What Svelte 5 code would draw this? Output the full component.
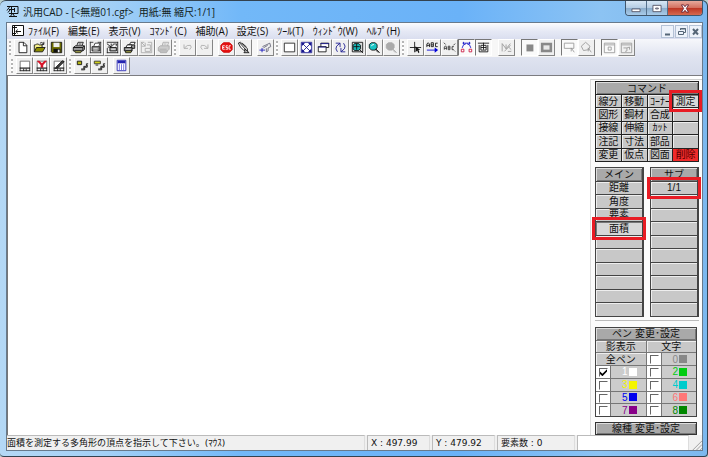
<script>
  const menus = ['ﾌｧｲﾙ(F)', '編集(E)', '表示(V)', 'ｺﾏﾝﾄﾞ(C)', '補助(A)', '設定(S)', 'ﾂｰﾙ(T)', 'ｳｨﾝﾄﾞｳ(W)', 'ﾍﾙﾌﾟ(H)'];

  // each icon is a list of [path, fill, stroke] on a 15x15 grid
  const icons = {
    new: [['M3.5 1.5H9L12.5 5V13.5H3.5Z', '#fff', '#111'], ['M8.5 1.5V5.5H12.5', 'none', '#111']],
    open: [
      ['M1.5 12.5V4.5H3L4 3.5H6L7 4.5H10.5V7.5', '#f4ee8a', '#111'],
      ['M1.5 12.5L4 7.5H14L11 12.5Z', '#8c8c00', '#111'],
      ['M8 2.5Q10 0.5 12.5 3.5M12.5 1V4H10', 'none', '#111']
    ],
    save: [
      ['M1.5 1.5H13.5V13.5H2.5L1.5 12.5Z', '#6d6d00', '#111'],
      ['M4 2H11V7H4Z', '#eee', 'none'],
      ['M4 9H12V13H4Z', '#111', 'none'],
      ['M9 10H11V13H9Z', '#eee', 'none']
    ],
    print: [
      ['M5.5 5.5L7 1.5H13L11.5 5.5', '#fff', '#111'],
      ['M1.5 7.5L4 5.5H14L12.5 7.5Z', '#bbb', '#111'],
      ['M1.5 7.5H12.5V11.5H1.5ZM12.5 7.5L14.5 5.5V9.5L12.5 11.5', '#999', '#111'],
      ['M3 11.5H11L10 13.5H4Z', '#e6e66a', '#111'],
      ['M7.5 3.5H11', 'none', '#111']
    ],
    printView: [
      ['M1 1.5H5M1.5 1V14M1 13.5H14M13.5 1V14M10 1.5H14', 'none', '#333'],
      ['M5.5 6L7 2.5H12.5L11.5 6', '#fff', '#333'],
      ['M3.5 6.5H12.5V11.5H3.5Z', '#888', '#222'],
      ['M5 8.5H10M5 10.5H10', 'none', '#ddd']
    ],
    printArea: [
      ['M1 1.5H14M13.5 1V14M1 13.5H14M1.5 8V14', 'none', '#222'],
      ['M1 3L6 7M6 3V7H2', 'none', '#111'],
      ['M7.5 6L8.5 3.5H12.5L11.5 6', '#fff', '#222'],
      ['M4.5 7.5H12V11.5H4.5Z', '#999', '#111'],
      ['M6 9.5H11', 'none', '#eee']
    ],
    printAll: [
      ['M7.5 4L9 1.5H14L13 4', '#fff', '#111'],
      ['M5.5 4.5H13.5V8.5H5.5Z', '#999', '#111'],
      ['M3.5 7L5 4.5H10.5L9.5 7', '#fff', '#111'],
      ['M1.5 7.5H10.5V11.5H1.5Z', '#777', '#111'],
      ['M3 11.5H10L9 13.5H3Z', '#d8d85a', '#111'],
      ['M3 9.5H9', 'none', '#ddd']
    ],
    plotOff: [
      ['M1.5 1.5H5M1.5 1.5V13.5H13.5V1.5H9', 'none', '#aaa'],
      ['M1 1L6 6M6 2V6H2M6 8.5H12V12H6ZM8 4.5H12V8', 'none', '#aaa']
    ],
    plotAllOff: [
      ['M6 5.5L7 1.5H13.5L12 5.5', 'none', '#aaa'],
      ['M1.5 7.5L4 5.5H14V9.5L12 11.5H1.5ZM3 11.5L4 13.5H11L12 11.5M3 9.5H11M7.5 3.5H11', '#ccc', '#aaa']
    ],
    undo: [['M3.5 4V8.5H8M4 8Q7 4 11 5Q13 7 10 10', 'none', '#aaa']],
    redo: [['M11.5 4V8.5H7M11 8Q8 4 4 5Q2 7 5 10', 'none', '#aaa']],
    esc: [
      ['M4 2H11L14 5V10L11 13H4L1 10V5Z', '#e51212', '#c00'],
      ['M5.5 5.5H3V9.5H5.5M3 7.5H5M9 5.5H7V7.5H9V9.5H6.5M12.5 5.5H10.5V9.5H12.5', 'none', '#fff']
    ],
    hand: [
      ['M1.5 2.5L4 1.5L9 6L12 9V12L8 11L4 7Z', '#fff', '#111'],
      ['M3 2L10 10M6 2.5L11 7M9 12V9L14 13.5H8Z', '#bbb', '#111']
    ],
    locate: [
      ['M0.5 10.5H7M3.5 8V13', 'none', '#1414b8'],
      ['M4 6.5L12.5 2.5L13.5 6.5L10.5 8V11.5L8.5 12.5V8.5M5 8L10 5', 'none', '#667']
    ],
    frame: [['M1.5 2.5H13.5V12.5H1.5Z', '#fff', '#222']],
    fit: [
      ['M1.5 1.5H13.5V13.5H1.5Z', '#fff', '#17178e'],
      ['M2 2H6L2 6ZM13 2H9L13 6ZM2 13V9L6 13ZM13 13H9L13 9Z', '#17178e', 'none'],
      ['M3 3L12 12M12 3L3 12', 'none', '#17178e']
    ],
    previous: [
      ['M4.5 2.5H13.5V7.5H4.5Z', '#fff', '#111'],
      ['M4 3H14', 'none', '#17178e'],
      ['M1.5 6.5H10.5V12.5H1.5Z', '#fff', '#111'],
      ['M1 7H11', 'none', '#17178e']
    ],
    refresh: [['M2 2.5H7V7M7 2.5L3 6Q1 9 4 12.5M13 12.5H8V8M8 12.5L12 9Q14 6 11 2.5', 'none', '#17178e']],
    zoomArea: [
      ['M1.5 1.5H13.5V12.5H1.5Z', '#ddd', '#111'],
      ['M4 3H9L11 5V9L9 11H4L2.5 9V5Z', '#16b4b4', '#111'],
      ['M9.5 9.5L14 14M3 6.5H10M6.5 3V10', 'none', '#111']
    ],
    zoom: [
      ['M4 2H8L10.5 4V8L8 10.5H4L1.5 8V4Z', '#18c4c4', '#111'],
      ['M4 6Q4 4 7 4', 'none', '#fff'],
      ['M9 9L13.5 13.5M8.5 10L12 13.5', 'none', '#111']
    ],
    zoomOff: [['M4 2H8L10.5 4V8L8 10.5H4L1.5 8V4Z', '#aaa', '#aaa'], ['M9 9L13.5 13.5M8.5 10L12 13.5', 'none', '#aaa']],
    cross: [['M1 7.5H14M6.5 1V13', 'none', '#111'], ['M7.5 6V13L9.5 11L11 14L12 13L11 10.5H13Z', '#111', 'none']],
    textRight: [
      ['M1 7V3.5L2.5 2L4 3.5V7M1 5H4M6 6.5V2H8.5V6.5ZM6 4.5H8.5M13.5 2.5H11V6.5H13.5', 'none', '#111'],
      ['M1 10.5H11', 'none', '#0000d8'],
      ['M10 7.5L14 10.5L10 13.5Z', '#0000d8', 'none']
    ],
    text: [['M1.5 10V7L3 5.5L4 7V10M1.5 8.5H4M6 10V6H8V10ZM6 8H8M12.5 6.5H10.5V10H12.5M1 2L3 4M14 3L12 5M13 11L14 12', 'none', '#333']],
    arc: [
      ['M2.5 8Q3 4 7 3M12.5 8Q12 4 8 3M3 2.5H12M4 1V4M11 1V4', 'none', '#1414c8'],
      ['M1.5 9.5H4.5V12.5H1.5ZM10.5 9.5H13.5V12.5H10.5Z', '#fff', '#c8143c']
    ],
    picture: [['M1 2.5H14M4.5 5H10.5V10.5H4.5ZM7.5 2V10M4.5 7.5H10.5M2.5 4.5V12.5H12.5V4.5', 'none', '#111']],
    penOff: [['M2.5 3V12M2.5 3L7 9M7 4V9M7 9L12 3M5 12L12 5M9 12H13M10 7L13 10', 'none', '#999']],
    solid: [['M4 4H12V12H4Z', '#888', 'none']],
    hollow: [['M1 2H14V13H1Z', '#888', 'none'], ['M4 5H11V10H4Z', '#e8e8e8', 'none']],
    pickBox: [['M1.5 2.5H12.5V8.5H1.5ZM9.5 8L13 13M9.5 8V12', 'none', '#999']],
    pickPoly: [['M6.5 1.5L11.5 6L10 10L4 11L1.5 6ZM9.5 8L13 13M9.5 8V12', 'none', '#999']],
    viewBox: [['M1.5 2.5H13.5V13.5H1.5ZM2 4.5H13M6 7H9.5V10.5H6Z', 'none', '#999']],
    viewPoly: [['M1.5 2.5H13.5V13.5H1.5ZM2 4.5H13M4 8H8V11.5L6 12M8 8L11 7V10', 'none', '#999']],
    snap: [
      ['M2.5 2.5H13.5V10.5H2.5Z', '#fff', '#666'],
      ['M2 10.5H14M2.5 10V14M13.5 10V14M2 13.5H14M6.5 11V14M9.5 11V14', 'none', '#222']
    ],
    snapOff: [
      ['M2.5 2.5H13.5V10.5H2.5Z', '#fff', '#666'],
      ['M2 2H5L8 5L11 2H14L9.5 7V10H6.5V7Z', '#d81428', 'none'],
      ['M2 10.5H14M2.5 10V14M13.5 10V14M2 13.5H14M6.5 11V14M9.5 11V14', 'none', '#222']
    ],
    snapEdit: [
      ['M2.5 2.5H13.5V10.5H2.5Z', '#fff', '#666'],
      ['M5 9L12 2L14 3L7 10L4 11Z', '#444', '#111'],
      ['M2 10.5H14M2.5 10V14M13.5 10V14M2 13.5H14M6.5 11V14M9.5 11V14', 'none', '#222']
    ],
    layer: [['M1.5 2.5H6.5V6.5H1.5Z', '#b4b414', '#111'], ['M6 11.5H9V8.5H12V5.5H14M6 12.5H10V9.5H13V6.5', 'none', '#111']],
    layerSet: [
      ['M1.5 2.5H8.5V5.5H1.5Z', '#d0d018', '#333'],
      ['M3 7H6M6 11.5H9V8.5H12V5.5H14M6 12.5H10V9.5H13V6.5', 'none', '#111']
    ],
    calc: [
      ['M2.5 1.5H12.5V13.5H2.5Z', '#fff', '#2222b0'],
      ['M3 2H12V5H3Z', '#2222b0', 'none'],
      ['M5 6V13M7.5 6V13M10 6V13', 'none', '#6a6ae0']
    ]
  };

  const toolbar = [
    { items: [['new', '新規'], ['open', '開く'], ['save', '保存']] },
    { sep: 'gap', items: [['print', '印刷'], ['printView', '印刷プレビュー'], ['printArea', '範囲印刷'], ['printAll', '連続印刷'], ['plotOff', 'プロット', 'off'], ['plotAllOff', '連続プロット', 'off']] },
    { sep: 'grip', items: [['undo', '元に戻す', 'off'], ['redo', 'やり直し', 'off']] },
    { sep: 'gap', items: [['esc', '中断'], ['hand', '手動']] },
    { sep: 'gap', items: [['locate', '位置']] },
    { sep: 'grip', items: [['frame', '枠'], ['fit', '全体'], ['previous', '前画面'], ['refresh', '再表示'], ['zoomArea', '範囲拡大'], ['zoom', '拡大'], ['zoomOff', '縮小', 'off']] },
    { sep: 'grip', items: [['cross', 'カーソル'], ['textRight', '文字方向'], ['text', '文字'], ['arc', '円弧', 'down'], ['picture', '画像', 'down']] },
    { sep: 'wide', items: [['penOff', 'ペン', 'off']] },
    { sep: 'wide', items: [['solid', '塗り', 'down'], ['hollow', '中抜き']] },
    { sep: 'wide', items: [['pickBox', '矩形選択', 'down'], ['pickPoly', '多角形選択']] },
    { sep: 'wide', items: [['viewBox', '矩形表示', 'down'], ['viewPoly', '多角形表示']] }
  ];

  const subbar = [
    { items: [['snap', 'スナップ'], ['snapOff', 'スナップ解除'], ['snapEdit', 'スナップ編集']] },
    { sep: 'grip', items: [['layer', 'レイヤ'], ['layerSet', 'レイヤ設定']] },
    { sep: 'gap', items: [['calc', '電卓']] }
  ];

  const commands = [
    '線分', '移動', 'ｺｰﾅｰ', '測定',
    '図形', '鋼材', '合成', '',
    '接線', '伸縮', 'ｶｯﾄ', '',
    '注記', '寸法', '部品', '',
    '変更', '仮点', '図面', '削除'
  ];
  const mainItems = ['距離', '角度', '要素', '面積', '', '', '', '', '', ''];
  const subItems = ['1/1', '', '', '', '', '', '', '', '', ''];

  const penColors = ['gray', 'white', 'lime', 'yellow', 'cyan', 'blue', 'pink', 'purple', 'green'];
  let shown = $state([false, true, false, false, false, false, false, false, false]);
  let command = $state('測定');
  let mainItem = $state('面積');
</script>

{#snippet icon(name)}
  <svg viewBox="0 0 15 15" aria-hidden="true">
    {#each icons[name] as [d, fill, stroke]}
      <path {d} {fill} {stroke} />
    {/each}
  </svg>
{/snippet}

{#snippet tools(groups)}
  {#each groups as group}
    {#if group.sep}<span class={group.sep}></span>{/if}
    {#each group.items as [name, label, mode]}
      <button class="tool {mode}" aria-label={label} disabled={mode === 'off'}>{@render icon(name)}</button>
    {/each}
  {/each}
{/snippet}

{#snippet pen(n)}
  <span class="check"><input type="checkbox" id="pen{n}" bind:checked={shown[n]} /></span>
  <label class="pen {penColors[n]}" for="pen{n}">{n}<i></i></label>
{/snippet}

<div class="window">
  <header class="title">
    <svg class="app-icon" viewBox="0 0 13 13" aria-hidden="true">
      <path d="M1 1.5H12V8.5H3M5.5 2V8M3 4.5H8M8.5 3V7M1 5.5L3.5 2M2 7.5L4 5M4 12L6 9M9 12L7 9M3 11.5H11" fill="none" stroke="#111" />
    </svg>
    <h1>汎用CAD - [&lt;無題01.cgf&gt;&nbsp; 用紙:無 縮尺:1/1]</h1>
    <div class="caption">
      <button aria-label="最小化"><svg viewBox="0 0 12 10"><path d="M1.5 5.5H10.5V8.5H1.5Z" fill="#fff" stroke="#556" /></svg></button>
      <button aria-label="元に戻す"><svg viewBox="0 0 12 10"><path d="M1.5 1.5H10.5V8.5H1.5ZM4.5 4.5H7.5V5.5H4.5Z" fill="#fff" stroke="#556" /></svg></button>
      <button class="close" aria-label="閉じる"><svg viewBox="0 0 12 10"><path d="M2 1H4.5L6 3L7.5 1H10L7.5 5L10 9H7.5L6 7L4.5 9H2L4.5 5Z" fill="#fff" stroke="#623" /></svg></button>
    </div>
  </header>

  <div class="client">
    <nav class="menubar">
      <svg class="doc-icon" viewBox="0 0 12 12" aria-hidden="true">
        <path d="M0.5 0.5H11.5V10.5H0.5Z" fill="#fff" stroke="#111" />
        <path d="M2.5 1V11M1 2.5H5M4 6.5H9M5.5 4.5L4 6.5L5.5 8.5M1 8.5H4" fill="none" stroke="#111" />
      </svg>
      {#each menus as menu}
        <button>{menu}</button>
      {/each}
      <div class="mdi">
        <button aria-label="文書を最小化"><svg viewBox="0 0 11 11"><path d="M3 8.5H8" fill="none" stroke="#567" stroke-width="2" /></svg></button>
        <button aria-label="文書を元に戻す"><svg viewBox="0 0 11 11"><path d="M4.5 4V2.5H9.5V6.5H8M2.5 5.5H7.5V8.5H2.5ZM4 3H10" fill="none" stroke="#567" /></svg></button>
        <button aria-label="文書を閉じる"><svg viewBox="0 0 11 11"><path d="M3 3L8 8.5M8 3L3 8.5" fill="none" stroke="#567" stroke-width="2" /></svg></button>
      </div>
    </nav>

    <div class="bars">
      <div class="toolbar"><span class="grip"></span>{@render tools(toolbar)}</div>
      <div class="toolbar second"><span class="grip"></span>{@render tools(subbar)}</div>
    </div>

    <main>
      <section class="canvas" aria-label="図面"></section>

      <aside>
        <section class="commands">
          <h2>コマンド</h2>
          {#each commands as name}
            <button class:on={name === command && name} class:marked={name === '測定'} class:delete={name === '削除'} onclick={() => (command = name)}>{name}</button>
          {/each}
        </section>

        <div class="lists">
          <section class="list">
            <h2>メイン</h2>
            {#each mainItems as name}
              <button class:on={name === mainItem && name} class:marked={name === '面積'} onclick={() => (mainItem = name)}>{name}</button>
            {/each}
          </section>
          <section class="list">
            <h2>サブ</h2>
            {#each subItems as name}
              <button class:marked={name === '1/1'}>{name}</button>
            {/each}
          </section>
        </div>

        <section class="lower">
          <div class="pens">
            <button class="heading">ペン 変更･設定</button>
            <button class="half">影表示</button>
            <button class="half">文字</button>
            <button class="half">全ペン</button>
            {#each penColors as _, n}
              {@render pen(n)}
            {/each}
          </div>
          <button class="heading line">線種 変更･設定</button>
        </section>
      </aside>
    </main>

    <footer>
      <span class="message">面積を測定する多角形の頂点を指示して下さい。(ﾏｳｽ)</span>
      <span class="cell">X : 497.99</span>
      <span class="cell">Y : 479.92</span>
      <span class="cell count">要素数 : 0</span>
      <span class="progress"></span>
      <svg class="resize" viewBox="0 0 12 12" aria-hidden="true"><path d="M2 12L12 2M6 12L12 6M10 12L12 10" fill="none" stroke="#999" /></svg>
    </footer>
  </div>
</div>

<style>
  :global(body) {
    background: #b9cfcf;
  }

  .window {
    box-sizing: border-box;
    min-height: 100vh;
    display: flex;
    flex-direction: column;
    padding: 0 4px 5px 6px;
    border: 1px solid #33424f;
    border-width: 1px 1px 1px 0;
    border-radius: 6px 6px 4px 4px;
    background: linear-gradient(90deg, #b4d8f5 0, #a3d0f6 15%, #72b8f8 34%, #6ab2f8 65%, #8cc3f3 85%, #7cb8ee 100%);
    font-family: "Open Sans", "Noto Sans CJK JP", sans-serif;
    font-size: 10px;
    color: #111;
  }

  button {
    margin: 0;
    padding: 0;
    border: 0;
    background: none;
    font: inherit;
    color: inherit;
    white-space: nowrap;
  }

  h1, h2 {
    margin: 0;
    font-weight: 400;
  }

  .title {
    display: flex;
    align-items: center;
    height: 21px;
    gap: 4px;
  }

  .app-icon {
    width: 13px;
    height: 13px;
  }

  h1 {
    flex: 1;
    font-size: 10px;
    line-height: 20px;
    color: #122;
    white-space: nowrap;
  }

  .caption {
    display: flex;
    align-self: flex-start;
    border: 1px solid #40566c;
    border-top: 0;
    border-radius: 0 0 4px 4px;
    overflow: hidden;
  }

  .caption button {
    display: grid;
    place-items: center;
    width: 21px;
    height: 14px;
    border-right: 1px solid #54708c;
    background: linear-gradient(#d7e7f5, #b5cde3 48%, #8aaccb 50%, #a8cbe9);
  }

  .caption .close {
    width: 34px;
    border: 0;
    background: linear-gradient(#e7a99c, #d4705f 48%, #bd3422 50%, #d56a50);
  }

  .caption svg {
    width: 12px;
    height: 9px;
  }

  .client {
    flex: 1;
    display: flex;
    flex-direction: column;
    border: 1px solid #687a8c;
    background: #f0f0f0;
  }

  .menubar {
    display: flex;
    align-items: center;
    gap: 9px;
    height: 16px;
    padding-left: 5px;
    background: linear-gradient(#fbfcfe, #e6e9f5 50%, #dadeef);
    line-height: 16px;
  }

  .doc-icon {
    width: 12px;
    height: 12px;
    margin-right: -5px;
  }

  .mdi {
    display: flex;
    gap: 1px;
    margin-left: auto;
  }

  .mdi button {
    display: grid;
    place-items: center;
    box-sizing: border-box;
    width: 13px;
    height: 13px;
    border: 1px solid #b4c2d6;
    background: #edf2fa;
  }

  .mdi svg {
    width: 11px;
    height: 11px;
  }

  .bars {
    background: linear-gradient(#f6f7fb, #dfe3f0 50%, #d5daea);
    border-bottom: 1px solid #7c7c80;
  }

  .toolbar {
    display: flex;
    box-sizing: border-box;
    width: max-content;
    height: 18px;
    background: #f7f7f7;
  }

  .second {
    padding-left: 2px;
  }

  .tool {
    box-sizing: border-box;
    width: 17px;
    height: 17px;
    border: 1px solid;
    border-color: #fff #858585 #858585 #fff;
    background: #f0f0f0;
  }

  .tool.down {
    border-color: #777 #fff #fff #777;
    background: #fafafa;
  }

  .tool svg {
    display: block;
    width: 15px;
    height: 15px;
    padding: 1px;
    box-sizing: border-box;
  }

  .gap {
    width: 5px;
  }

  .wide {
    width: 6px;
  }

  .grip {
    box-sizing: border-box;
    width: 7px;
    margin: 2px 0;
    border: solid transparent;
    border-width: 0 3px 0 2px;
    background: repeating-linear-gradient(#b5b5b5 0 2px, #fff 2px 4px) padding-box;
  }

  main {
    flex: 1;
    display: flex;
  }

  .canvas {
    flex: 1;
    border-left: 1px solid #777;
    background: #fff;
  }

  aside {
    width: 104px;
    margin-top: 3px;
    padding: 1px 3px 0 4px;
    border-top: 1px solid #d0d0d0;
    border-left: 1px solid #ddd;
    background: #fbfbfb;
    box-shadow: 0 -3px #fff;
    font-family: "Liberation Sans", "Noto Sans CJK JP", sans-serif;
  }

  aside button, h2 {
    position: relative;
    display: flex;
    align-items: center;
    justify-content: center;
    min-width: 0;
    background: #c8c8c8;
    font-size: 10px;
    line-height: 11px;
  }

  aside button {
    box-shadow: inset 1px 1px #eee;
  }

  h2, aside .heading {
    background: #a9a9a9;
    box-shadow: inset 1px 1px #ddd, inset -1px -1px #777;
  }

  .commands {
    display: grid;
    grid-template-columns: repeat(4, 1fr);
    grid-template-rows: 12px repeat(5, 1fr);
    gap: 1px;
    box-sizing: border-box;
    height: 81px;
    border: 1px solid #222;
    background: #222;
  }

  .commands h2 {
    grid-column: 1 / -1;
  }

  aside .on {
    background: #d8d8d8;
    box-shadow: inset 1px 1px #777;
  }

  aside .delete {
    background: #f02a2a;
    color: #500;
    box-shadow: none;
  }

  /* red callout frames */
  .marked::after {
    content: '';
    position: absolute;
    inset: -5px -4px;
    z-index: 1;
    border: 3px solid #e81c24;
  }

  .lists {
    display: grid;
    grid-template-columns: 1fr 1fr;
    gap: 6px;
    margin-top: 5px;
  }

  .list {
    display: grid;
    grid-template-rows: repeat(11, 1fr);
    gap: 1px;
    box-sizing: border-box;
    height: 150px;
    border: 1px solid #444;
    border-right-width: 2px;
    background: #444;
  }

  .lower {
    margin-top: 3px;
    padding: 6px 2px 0 0;
    border-top: 1px solid #bbb;
  }

  .pens {
    display: grid;
    grid-template-columns: 14px 1fr 14px 1fr;
    grid-template-rows: repeat(7, 1fr);
    gap: 1px;
    box-sizing: border-box;
    height: 90px;
    border: 1px solid #444;
    background: #777;
  }

  .pens .heading {
    grid-column: 1 / -1;
  }

  .half {
    grid-column: span 2;
  }

  .line {
    box-sizing: border-box;
    width: 100%;
    height: 13px;
    margin-top: 5px;
    border: 1px solid #333;
  }

  .check {
    display: flex;
    background: #fff;
  }

  .check input {
    appearance: none;
    width: 9px;
    height: 9px;
    margin: 2px 0 0 3px;
    border: 1px solid;
    border-color: #666 #fff #fff #666;
    box-sizing: border-box;
  }

  .check input:checked::before {
    content: '';
    display: block;
    width: 7px;
    height: 7px;
    background: #000;
    clip-path: polygon(0 35%, 35% 65%, 100% 0, 100% 35%, 35% 100%, 0 70%);
  }

  .pen {
    display: flex;
    align-items: center;
    justify-content: flex-end;
    gap: 1px;
    padding-right: 9px;
    background: #ccc;
    line-height: 11px;
  }

  .pen i {
    width: 8px;
    height: 8px;
    background: currentColor;
  }

  .gray { color: #888; }
  .white { color: #fff; }
  .lime { color: #0c1; }
  .yellow { color: #f5f500; }
  .cyan { color: #0cc; }
  .blue { color: #00e; }
  .pink { color: #f77; }
  .purple { color: #808; }
  .green { color: #080; }

  footer {
    display: flex;
    gap: 2px;
    height: 15px;
    font-family: "DejaVu Sans", "Noto Sans CJK JP", sans-serif;
    font-size: 9px;
    line-height: 14px;
    white-space: nowrap;
  }

  .message {
    flex: 1;
  }

  footer span {
    box-sizing: border-box;
    border-top: 1px solid #bbb;
    border-right: 1px solid #ddd;
  }

  .cell {
    width: 63px;
    padding-left: 3px;
    border-left: 1px solid #bbb;
  }

  .count {
    width: 78px;
  }

  .progress {
    width: 112px;
    border-left: 1px solid #bbb;
    background: #fff;
  }

  .resize {
    align-self: flex-end;
    width: 11px;
    height: 11px;
  }
</style>
